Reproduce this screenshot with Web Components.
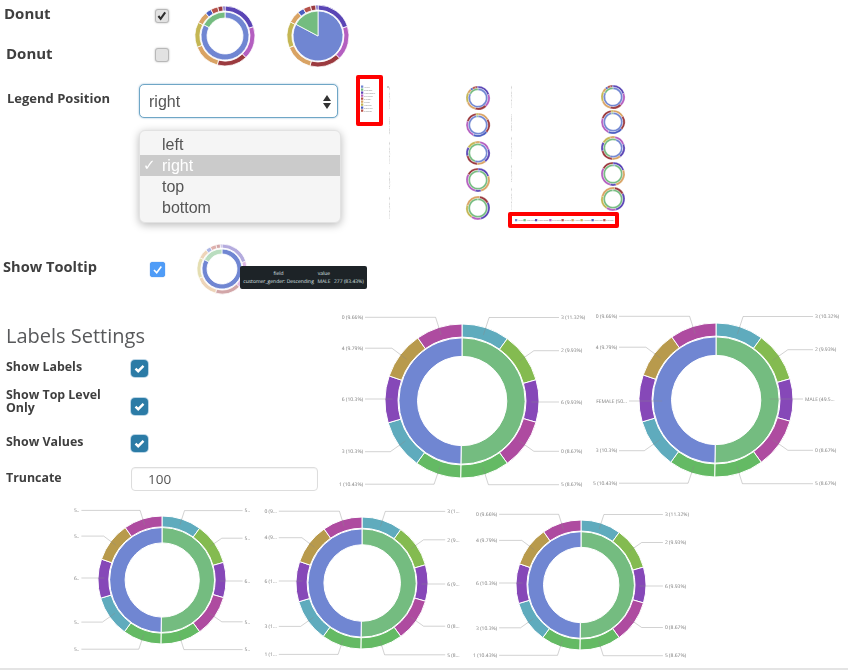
<!DOCTYPE html>
<html>
<head>
<meta charset="utf-8">
<title>Donut settings</title>
<style>
  html, body { margin: 0; padding: 0; background: #fff; }
</style>
</head>
<body>
<app-page></app-page>
<script>
var COLORS = {
  blue: "#7086d2", green: "#74bc80", teal: "#5fabbd", lime: "#84bb50", purple: "#8648b8",
  magenta: "#ae4ba0", leaf: "#64ba64", sand: "#b89a4c",
  indigo: "#5a45b5", orchid: "#b45fc0", wine: "#9b3a3f", tan: "#d9a364", olive: "#c4b653",
  cobalt: "#4a5dc0", brick: "#b5524a"
};

// [start angle, end angle, colour], clockwise from the top
var BIG_OUTER = [
  [0, 36, "teal"], [36, 74, "lime"], [74, 106, "purple"], [106, 144, "magenta"], [144, 181, "leaf"],
  [181, 216, "leaf"], [216, 253.5, "teal"], [253.5, 289, "purple"], [289, 325, "sand"], [325, 360, "magenta"]
];
var BIG_INNER = [[0, 181, "green"], [181, 360, "blue"]];

var DAY_OUTER = [
  [0, 72, "indigo"], [72, 136, "orchid"], [136, 195, "wine"], [195, 248, "tan"], [248, 297, "olive"],
  [297, 320, "tan"], [320, 332, "cobalt"], [332, 346, "brick"], [346, 356, "wine"], [356, 360, "indigo"]
];
var DAY_INNER = [[0, 298, "blue"], [298, 360, "green"]];

var DATASETS = {
  big: { inner: BIG_INNER, outer: BIG_OUTER },
  day: { inner: DAY_INNER, outer: DAY_OUTER },
  a: { inner: DAY_INNER, outer: DAY_OUTER },
  b: {
    inner: [[0, 352, "blue"], [352, 360, "green"]],
    outer: [[0, 60, "tan"], [60, 130, "wine"], [130, 205, "cobalt"], [205, 290, "orchid"], [290, 350, "wine"], [350, 360, "olive"]]
  },
  c: {
    inner: [[20, 200, "blue"], [200, 380, "green"]],
    outer: [[10, 70, "orchid"], [70, 140, "indigo"], [140, 185, "tan"], [185, 255, "wine"], [255, 300, "indigo"], [300, 345, "olive"], [345, 370, "tan"]]
  },
  d: {
    inner: [[0, 12, "blue"], [12, 360, "green"]],
    outer: [[0, 70, "indigo"], [70, 165, "tan"], [165, 195, "indigo"], [195, 300, "orchid"], [300, 360, "wine"]]
  },
  e: {
    inner: [[0, 360, "green"]],
    outer: [[8, 62, "wine"], [62, 165, "indigo"], [165, 215, "orchid"], [215, 285, "olive"], [285, 368, "tan"]]
  }
};

function point(r, deg) {
  var a = (deg - 90) * Math.PI / 180;
  return [r * Math.cos(a), r * Math.sin(a)];
}

function arcPath(r0, r1, from, to) {
  var sweep = to - from;
  if (sweep >= 360) { to = from + 359; sweep = 359; }
  var big = sweep > 180 ? 1 : 0;
  var p1 = point(r1, from), p2 = point(r1, to), p3 = point(r0, to), p4 = point(r0, from);
  var d = "M" + p1[0].toFixed(2) + " " + p1[1].toFixed(2) +
    "A" + r1 + " " + r1 + " 0 " + big + " 1 " + p2[0].toFixed(2) + " " + p2[1].toFixed(2);
  if (r0 === 0) return d + "L0 0Z";
  return d + "L" + p3[0].toFixed(2) + " " + p3[1].toFixed(2) +
    "A" + r0 + " " + r0 + " 0 " + big + " 0 " + p4[0].toFixed(2) + " " + p4[1].toFixed(2) + "Z";
}

class SunDonut extends HTMLElement {
  connectedCallback() {
    var w = +this.getAttribute("w");
    var h = +this.getAttribute("h") || w;
    var r = +this.getAttribute("r");
    var data = DATASETS[this.getAttribute("data")];
    var hole = this.hasAttribute("hole") ? +this.getAttribute("hole") : r * 0.58;
    var ring = +this.getAttribute("ring") || r * 0.82;
    var gap = +this.getAttribute("gap") || r * 0.83;
    var stroke = this.getAttribute("stroke") || "1";
    var faded = this.hasAttribute("faded");
    var labels = this.getAttribute("labels");
    var innerLabels = this.hasAttribute("inner-labels");

    var svg = "";
    data.inner.forEach(function(s) {
      var op = faded && s[2] !== "blue" ? " opacity=\".5\"" : "";
      svg += '<path d="' + arcPath(hole, ring, s[0], s[1]) + '" fill="' + COLORS[s[2]] + '" stroke="#fff" stroke-width="' + stroke + '"' + op + '/>';
    });
    data.outer.forEach(function(s) {
      var op = faded ? " opacity=\".45\"" : "";
      svg += '<path d="' + arcPath(gap, r, s[0], s[1]) + '" fill="' + COLORS[s[2]] + '" stroke="#fff" stroke-width="' + stroke + '"' + op + '/>';
    });

    // Leader lines and their labels
    if (labels) {
      labels.split("|").forEach(function(text, i) {
        var seg = BIG_OUTER[i];
        var mid = (seg[0] + seg[1]) / 2;
        var right = mid < 180;
        var sign = right ? 1 : -1;
        var a = point(r * 0.9, mid), b = point(r * 1.14, mid);
        var endX = sign * r * 1.26, endY = b[1];
        if (innerLabels && (i === 2 || i === 7)) {
          a = [sign * r * 0.7, i === 2 ? -1 : 1];
          b = a;
          endX = sign * r * 1.13;
          endY = a[1];
        } else if (i === 2 || i === 7) {
          a = [sign * r * 0.9, i === 2 ? 1 : -2];
          b = a;
          endY = a[1];
        }
        svg += '<polyline points="' + a[0].toFixed(1) + "," + a[1].toFixed(1) + " " + b[0].toFixed(1) + "," + b[1].toFixed(1) + " " + endX.toFixed(1) + "," + endY.toFixed(1) + '" fill="none" stroke="#8a8a8a" stroke-opacity=".55" stroke-width=".7"/>';
        svg += '<text x="' + (endX + sign * 2).toFixed(1) + '" y="' + (endY + 1.7).toFixed(1) + '" text-anchor="' + (right ? "start" : "end") + '">' + text + "</text>";
      });
    }

    this.attachShadow({ mode: "open" }).innerHTML =
      "<style>:host{display:block;flex:none;width:" + w + "px;height:" + h + "px}" +
      "svg{display:block;overflow:visible}text{font:5px 'Open Sans',sans-serif;fill:#7a7a7a;text-rendering:geometricPrecision}</style>" +
      '<svg width="' + w + '" height="' + h + '" viewBox="' + (-w / 2) + " " + (-h / 2) + " " + w + " " + h + '">' + svg + "</svg>";
  }
}

class CheckMark extends HTMLElement {
  connectedCallback() {
    var kind = this.getAttribute("kind") || "mac";
    var on = this.hasAttribute("on");
    var mark = {
      mac: '<path d="M3 7.5 5.8 11 11.5 3" stroke="#2e2e2e" stroke-width="2.6" fill="none"/>',
      blue: '<path d="M4 8 6.7 10.8 11.3 4.6" stroke="#fff" stroke-width="1.6" fill="none"/>',
      teal: '<path d="M4.5 8.6 7.2 11.2 12.5 5.8" stroke="#fff" stroke-width="2.4" fill="none"/>'
    }[kind];
    this.attachShadow({ mode: "open" }).innerHTML = `
      <style>
        :host { display: block; flex: none; box-sizing: border-box; }
        :host([kind="mac"]) { width: 14px; height: 14px; border-radius: 3px; background: #e2e2e2; border: 1px solid #b8b8b8; box-shadow: 0 0 2px rgba(0,0,0,.3); }
        :host([kind="blue"]) { width: 15px; height: 15px; border-radius: 3px; background: #4f9cf7; box-shadow: 0 0 1px #2a6fd0; }
        :host([kind="teal"]) { width: 17px; height: 17px; border-radius: 4px; background: #2b7ba6; box-shadow: 0 0 0 1px #bcd6e6; }
        svg { display: block; width: 100%; height: 100%; }
      </style>
      <svg viewBox="0 0 ${kind === "teal" ? 17 : 15} ${kind === "teal" ? 17 : 15}">${on ? mark : ""}</svg>`;
  }
}
customElements.define("sun-donut", SunDonut);
customElements.define("check-mark", CheckMark);

var SELECT_TMPL = document.createElement("template");
SELECT_TMPL.innerHTML = `
<style>
  :host { display: block; position: relative; width: 199px; font-family: "Liberation Sans", Arial, sans-serif; }
  .box {
    box-sizing: border-box; height: 34px; display: flex; align-items: center; justify-content: space-between;
    padding: 1px 5px 0 9px; border: 1px solid #6fa6c6; border-radius: 5px;
    box-shadow: 0 0 2px rgba(90,150,190,.7); font-size: 16px; color: #555; background: #fff;
  }
  .menu {
    position: absolute; left: 0; top: 46px; width: 202px; box-sizing: border-box; padding: 3px 0 4px;
    background: #f5f5f5; border-radius: 6px; border: 1px solid #e2e2e2;
    box-shadow: 0 2px 8px rgba(0,0,0,.28); font-size: 16px; color: #555;
  }
  .item { height: 21px; line-height: 21px; padding-left: 22px; position: relative; }
  .item.on { background: #cbcbcb; color: #fff; }
  .item.on span { position: absolute; left: 3px; top: 0; font-family: "DejaVu Sans", sans-serif; font-size: 15px; font-weight: 700; }
</style>
<div class="box">right
  <svg width="10" height="18" viewBox="0 0 10 18"><path d="M5 2 9 8H1Z M5 16 1 10H9Z" fill="#333"/></svg>
</div>
<div class="menu">
  <div class="item">left</div>
  <div class="item on"><span>✓</span>right</div>
  <div class="item">top</div>
  <div class="item">bottom</div>
</div>`;

class LegendSelect extends HTMLElement {
  connectedCallback() {
    this.attachShadow({ mode: "open" }).appendChild(SELECT_TMPL.content.cloneNode(true));
  }
}
customElements.define("legend-select", LegendSelect);

var LEGEND_ITEMS = [["Africa", "blue"], ["Thailand", "green"], ["Wednesday", "indigo"], ["Thursday", "orchid"], ["Sunday", "brick"],
  ["Friday", "tan"], ["Monday", "olive"], ["Saturday", "cobalt"], ["Tuesday", "brick"]];

// The legends are this small in the picture; laid out at 4x and scaled, or the glyphs collapse
class MiniLegend extends HTMLElement {
  connectedCallback() {
    var html = LEGEND_ITEMS.map(function(it) {
      return '<div class="it"><i style="background:' + COLORS[it[1]] + '"></i>' + it[0] + "</div>";
    }).join("");
    this.attachShadow({ mode: "open" }).innerHTML = `
      <style>
        :host { display: block; flex: none; box-sizing: border-box; border: 4px solid #f00; border-radius: 2px; background: #fff; overflow: hidden;
          color: #8a8a8a; font: 8.4px "Open Sans", sans-serif; }
        :host(:not([row])) { width: 27px; height: 51px; }
        :host([row]) { width: 111px; height: 16px; }
        .in { display: flex; box-sizing: border-box; transform: scale(.25); transform-origin: 0 0; }
        :host(:not([row])) .in { width: 76px; height: 172px; flex-direction: column; padding: 24px 0 0 4px; }
        :host([row]) .in { width: 412px; height: 32px; align-items: center; justify-content: space-between; padding: 0 12px; }
        .it { display: flex; align-items: center; gap: 3px; height: 12px; white-space: nowrap; }
        i { display: block; flex: none; width: 9px; height: 9px; }
      </style><div class="in">${html}</div>`;
  }
}
customElements.define("mini-legend", MiniLegend);

class MiniColumn extends HTMLElement {
  connectedCallback() {
    var rowH = this.getAttribute("row-h");
    var html = ["a", "b", "c", "d", "e"].map(function(key, i) {
      return '<div class="row"><div class="tick"><span>' + ["customer_gender: Des", "category.keyword", "customer_gender: Des", "day_of_week: Des", "customer_gender: Des"][i] +
        '</span></div><sun-donut data="' + key + '" w="26" r="12" hole="7.8" ring="9.8" gap="9.9" stroke=".25"></sun-donut></div>';
    }).join("");
    this.attachShadow({ mode: "open" }).innerHTML = `
      <style>
        :host { display: block; flex: none; position: relative; width: ${this.getAttribute("w")}px; }
        :host([dot])::before { content: ""; position: absolute; left: 1px; top: 2px; width: 2px; height: 2px; background: #ccc; }
        .row { height: ${rowH}px; display: flex; align-items: center; justify-content: space-between; }
        .tick { width: 3px; height: 24px; margin-left: 2px; display: flex; align-items: center; justify-content: center; }
        span { flex: none; writing-mode: vertical-rl; transform: rotate(180deg) scale(.25); font: 8.4px "Open Sans", sans-serif; color: #a8a8a8; white-space: nowrap; }
      </style>${html}<slot></slot>`;
  }
}
customElements.define("mini-column", MiniColumn);

class ChartTooltip extends HTMLElement {
  connectedCallback() {
    this.attachShadow({ mode: "open" }).innerHTML = `
      <style>
        :host { display: grid; grid-template-columns: auto auto auto; column-gap: 3px; align-content: center; box-sizing: border-box;
          position: absolute; left: 44px; top: 23px; width: 127px; height: 23px; padding: 0 3px;
          background: #1d2327; border-radius: 2px; color: #dfe3e5; font: 5px/8px "Open Sans", sans-serif; white-space: nowrap; text-rendering: geometricPrecision; }
        div { text-align: center; }
      </style>
      <div>field</div><div>value</div><div></div>
      <div>customer_gender: Descending</div><div>MALE</div><div>277 (83.43%)</div>`;
  }
}
customElements.define("chart-tooltip", ChartTooltip);

class SettingRow extends HTMLElement {
  connectedCallback() {
    this.attachShadow({ mode: "open" }).innerHTML = `
      <style>
        :host { display: flex; align-items: center; }
        .label { width: 125px; flex: none; font: 700 12.4px/13px "Open Sans", sans-serif; color: #3f3f3f; padding-bottom: 4px; box-sizing: border-box; padding-right: 20px; }
      </style>
      <div class="label">${this.getAttribute("label")}</div><slot></slot>`;
  }
}
customElements.define("setting-row", SettingRow);

var PAGE_TMPL = document.createElement("template");
PAGE_TMPL.innerHTML = `
<style>
  :host { display: flex; flex-direction: column; width: 848px; height: 670px; overflow: hidden; filter: blur(.45px);
    font-family: "Open Sans", sans-serif; color: #3f3f3f; }
  .label { font-weight: 700; white-space: nowrap; }

  /* top: the two donut toggles */
  .top { height: 72px; flex: none; display: flex; }
  .toggles { width: 193px; flex: none; }
  .toggle { display: flex; align-items: center; }
  .toggle .label { font-size: 15px; line-height: 20px; }
  .toggle.one { height: 28px; padding-left: 4px; }
  .toggle.two { height: 22px; padding-left: 6px; margin-top: 14px; }
  .toggle.one .label { width: 151px; margin-top: -2px; }
  .toggle.two .label { width: 149px; }
  .toggle.one check-mark { margin-top: 4px; }
  .toggle.two check-mark { margin-top: 3px; }
  .top sun-donut { margin-top: 4px; }
  .top sun-donut + sun-donut { margin-left: 29px; }

  /* legend position */
  .legend { height: 168px; flex: none; display: flex; }
  .legend-left { width: 356px; flex: none; display: flex; padding-top: 12px; box-sizing: border-box; }
  .legend-left .label { width: 132px; padding-left: 7px; font-size: 13px; line-height: 28px; flex: none; }
  .legend mini-legend:not([row]) { margin-top: 3px; }
  .legend mini-column { margin-top: 12px; }
  .col-one { margin-left: 3px; }
  .col-two { margin-left: 17px; }

  /* tooltip row */
  .tip { height: 60px; flex: none; display: flex; align-items: flex-start; position: relative; }
  .tip .label { width: 147px; padding-left: 3px; font-size: 14.6px; line-height: 20px; margin-top: 16px; }
  .tip check-mark { margin-top: 22px; }
  .tip-chart { position: relative; margin: 3px 0 0 31px; }

  /* labels settings */
  .settings { height: 197px; flex: none; display: flex; }
  .form { width: 342px; flex: none; box-sizing: border-box; padding: 23px 0 0 6px; }
  h2 { margin: 0 0 9px; font: 400 20px/26px "Open Sans", sans-serif; color: #58595b; }
  .r1 { height: 20px; }
  .r2 { margin-top: 10px; height: 30px; }
  .r2 check-mark { margin-top: 6px; }
  .r3 { margin-top: 15px; height: 20px; }
  .r4 { margin-top: 14px; height: 24px; }
  .num { width: 187px; height: 24px; box-sizing: border-box; border: 1px solid #ddd; border-radius: 4px; box-shadow: inset 0 1px 1px rgba(0,0,0,.05);
    padding-left: 16px; font: 13.5px/22px "Open Sans", sans-serif; color: #555; }
  .settings sun-donut:first-of-type { margin-top: 16px; }
  .settings sun-donut + sun-donut { margin: 15px 0 0 14px; }

  /* bottom row */
  .bottom { height: 171px; flex: none; display: flex; padding-left: 62px; }
  .b2 { margin-top: 3px; }
  .b3 { margin: 5px 0 0 19px; }
  .rule { height: 2px; flex: none; background: #e4e4e4; }
</style>

<section class="top">
  <div class="toggles">
    <div class="toggle one"><span class="label">Donut</span><check-mark kind="mac" on></check-mark></div>
    <div class="toggle two"><span class="label">Donut</span><check-mark kind="mac"></check-mark></div>
  </div>
  <sun-donut data="day" w="64" r="30" hole="18" ring="24" gap="25" stroke=".8"></sun-donut>
  <sun-donut data="day" w="64" r="31" hole="0" ring="25" gap="26" stroke=".8"></sun-donut>
</section>

<section class="legend">
  <div class="legend-left">
    <span class="label">Legend Position</span>
    <legend-select></legend-select>
  </div>
  <mini-legend></mini-legend>
  <mini-column class="col-one" dot w="105" row-h="27.5"></mini-column>
  <mini-column class="col-two" w="118" row-h="25.6"><mini-legend row></mini-legend></mini-column>
</section>

<section class="tip">
  <span class="label">Show Tooltip</span>
  <check-mark kind="blue" on></check-mark>
  <div class="tip-chart">
    <sun-donut data="day" w="52" r="25" hole="15" ring="20" gap="21" stroke=".8" faded></sun-donut>
    <chart-tooltip></chart-tooltip>
  </div>
</section>

<section class="settings">
  <div class="form">
    <h2>Labels Settings</h2>
    <setting-row class="r1" label="Show Labels"><check-mark kind="teal" on></check-mark></setting-row>
    <setting-row class="r2" label="Show Top Level Only"><check-mark kind="teal" on></check-mark></setting-row>
    <setting-row class="r3" label="Show Values"><check-mark kind="teal" on></check-mark></setting-row>
    <setting-row class="r4" label="Truncate"><div class="num">100</div></setting-row>
  </div>
  <sun-donut data="big" w="240" h="170" r="77" labels="3 (11.32%)|2 (9.93%)|6 (9.93%)|0 (8.67%)|5 (8.67%)|1 (10.43%)|3 (10.3%)|6 (10.3%)|4 (9.79%)|0 (9.66%)"></sun-donut>
  <sun-donut data="big" w="240" h="170" r="77" inner-labels labels="3 (10.32%)|2 (9.93%)|MALE (49.5...|0 (8.67%)|5 (8.67%)|5 (10.43%)|3 (10.3%)|FEMALE (50...|4 (9.79%)|0 (9.66%)"></sun-donut>
</section>

<section class="bottom">
  <sun-donut class="b1" data="big" w="200" h="166" r="64" labels="5..|5..|6..|5..|5..|5..|5..|6..|5..|5.."></sun-donut>
  <sun-donut class="b2" data="big" w="200" h="166" r="66" labels="3 (1...|2 (9...|6 (9...|0 (8...|5 (8...|1 (1...|3 (1...|6 (1...|4 (9...|0 (9..."></sun-donut>
  <sun-donut class="b3" data="big" w="200" h="166" r="65" labels="3 (11.32%)|2 (9.93%)|6 (9.93%)|0 (8.67%)|5 (8.67%)|1 (10.43%)|3 (10.3%)|6 (10.3%)|4 (9.79%)|0 (9.66%)"></sun-donut>
</section>
<div class="rule"></div>`;

class AppPage extends HTMLElement {
  connectedCallback() {
    this.attachShadow({ mode: "open" }).appendChild(PAGE_TMPL.content.cloneNode(true));
  }
}
customElements.define("app-page", AppPage);
</script>
</body>
</html>
